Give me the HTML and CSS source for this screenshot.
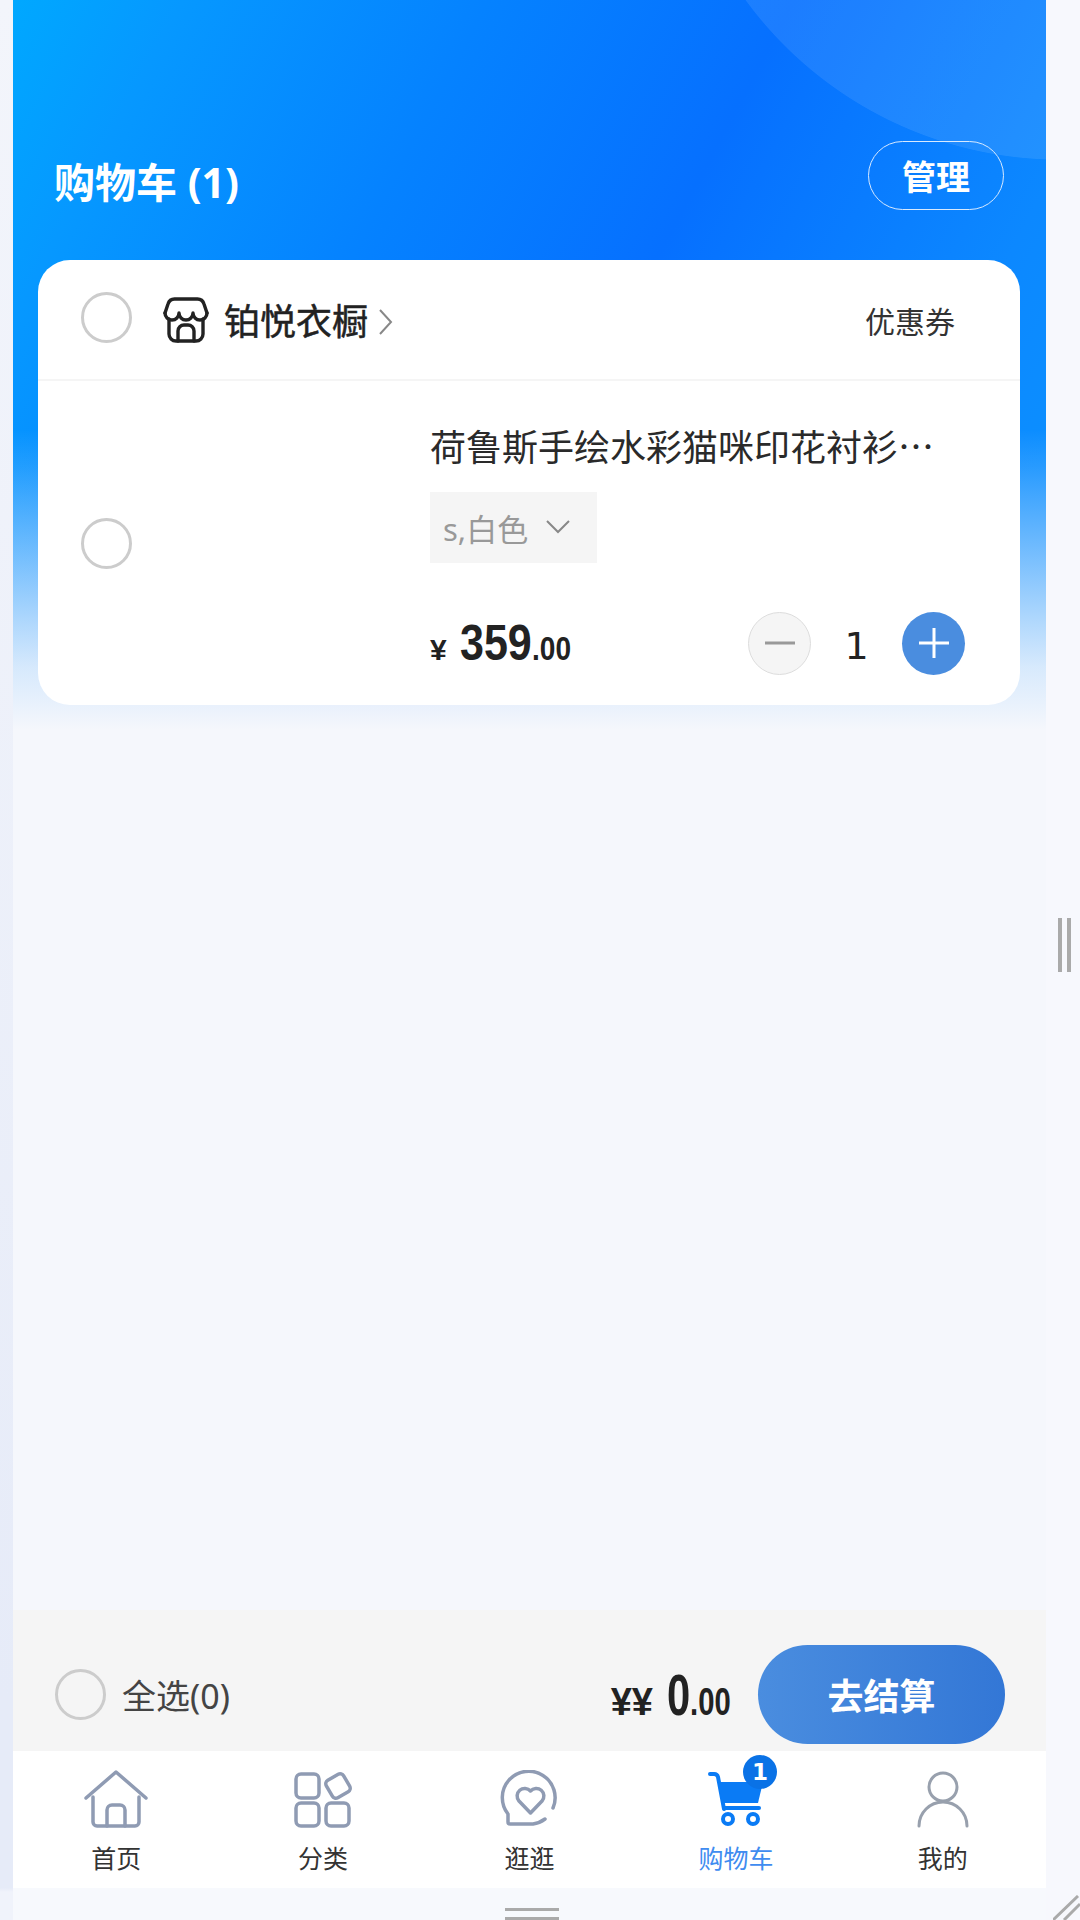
FILE: index.html
```html
<!DOCTYPE html>
<html lang="zh-CN">
<head>
  <meta charset="UTF-8">
  <title>购物车</title>
  <link rel="stylesheet" href="styles.css">
</head>
<body>
  <div class="stage">
    <div class="rail-left"></div>

    <div class="phone">
      <header class="top">
        <h1 class="title">购物车 (1)</h1>
        <button class="manage">管理</button>
      </header>

      <section class="card">
        <div class="shop">
          <span class="check"></span>
          <svg class="shop-icon" viewBox="0 0 46 46" fill="none" stroke="#222" stroke-width="3.400" stroke-linecap="round" stroke-linejoin="round">
            <path d="M2 16L5 7a7 7 0 0 1 7-5h22a7 7 0 0 1 7 5l3 9"/>
            <path d="M2 16a7 7 0 0 0 14 0 7 7 0 0 0 14 0 7 7 0 0 0 14 0"/>
            <path d="M6 22v15a7 7 0 0 0 7 7h20a7 7 0 0 0 7-7V22"/>
            <path d="M15 44V34a6 6 0 0 1 6-6h4a6 6 0 0 1 6 6v10"/>
          </svg>
          <span class="shop-name">铂悦衣橱</span>
          <svg class="shop-arrow" viewBox="0 0 14 26" fill="none" stroke="#888" stroke-width="2"><path d="M1 1l11 12L1 25"/></svg>
          <span class="coupon">优惠券</span>
        </div>

        <div class="product">
          <span class="check"></span>
          <div class="product-img"></div>
          <div class="info">
            <div class="name">荷鲁斯手绘水彩猫咪印花衬衫…</div>
            <div class="spec">
              <span>s,白色</span>
              <svg class="spec-arrow" viewBox="0 0 24 14" fill="none" stroke="#888" stroke-width="2"><path d="M1 1l11 11L23 1"/></svg>
            </div>
            <div class="buy">
              <div class="price"><span class="cur">¥</span><span class="int">359</span><span class="dec">.00</span></div>
              <div class="stepper">
                <span class="step minus"><svg viewBox="0 0 32 32" stroke="#999" stroke-width="3"><path d="M1 16h30"/></svg></span>
                <span class="qty">1</span>
                <span class="step plus"><svg viewBox="0 0 32 32" stroke="#fff" stroke-width="3"><path d="M1 16h30M16 1v30"/></svg></span>
              </div>
            </div>
          </div>
        </div>
      </section>

      <section class="settle">
        <span class="check"></span>
        <span class="all">全选(0)</span>
        <div class="total"><span class="cur">¥¥</span><span class="int">0</span><span class="dec">.00</span></div>
        <button class="pay">去结算</button>
      </section>

      <nav class="tabs">
        <a class="tab">
          <svg class="tab-icon" width="64" height="58" viewBox="0 0 64 58" fill="none" stroke="#8f9bb3" stroke-width="3.500" stroke-linecap="round" stroke-linejoin="round">
            <path d="M2 28L32 2l30 26"/>
            <path d="M9 27v25a4 4 0 0 0 4 4h38a4 4 0 0 0 4-4V27"/>
            <path d="M23 56V40a5 5 0 0 1 5-5h8a5 5 0 0 1 5 5v16"/>
          </svg>
          <span>首页</span>
        </a>
        <a class="tab">
          <svg class="tab-icon" width="58" height="58" viewBox="0 0 58 58" fill="none" stroke="#8f9bb3" stroke-width="3.500">
            <rect x="2" y="4" width="23" height="24" rx="5"/>
            <rect x="2" y="33" width="23" height="23" rx="5"/>
            <rect x="32" y="33" width="23" height="23" rx="5"/>
            <rect x="34" y="6" width="20" height="20" rx="4" transform="rotate(-30 44 16)"/>
          </svg>
          <span>分类</span>
        </a>
        <a class="tab">
          <svg class="tab-icon" width="58" height="58" viewBox="0 0 58 58" fill="none" stroke="#8f9bb3" stroke-width="3.500" stroke-linecap="round" stroke-linejoin="round">
            <path d="M45 49A26.400 26.400 0 0 1 33 54H10a2 2 0 0 1-2-2V44A26.400 26.400 0 1 1 53 38"/>
            <path d="M30.500 43L19 31a7.500 7.500 0 0 1 11.500-10A7.500 7.500 0 0 1 42 31z"/>
          </svg>
          <span>逛逛</span>
        </a>
        <a class="tab active">
          <span class="cart-wrap">
            <svg class="tab-icon" width="58" height="58" viewBox="0 0 58 58" fill="#0a7bf5">
              <path d="M3 4h4a4 4 0 0 1 4 3l6 32" fill="none" stroke="#0a7bf5" stroke-width="4" stroke-linecap="round"/>
              <path d="M11 12h45l-5 21H15z"/>
              <rect x="15" y="36" width="39" height="4" rx="2"/>
              <circle cx="21" cy="49" r="5" fill="none" stroke="#0a7bf5" stroke-width="4"/>
              <circle cx="46" cy="49" r="5" fill="none" stroke="#0a7bf5" stroke-width="4"/>
            </svg>
            <span class="badge">1</span>
          </span>
          <span>购物车</span>
        </a>
        <a class="tab">
          <svg class="tab-icon" width="58" height="58" viewBox="0 0 58 58" fill="none" stroke="#98a0ad" stroke-width="3" stroke-linecap="round">
            <circle cx="29" cy="17" r="14"/>
            <path d="M5 56a24 24 0 0 1 48 0"/>
          </svg>
          <span>我的</span>
        </a>
      </nav>
      <div class="bottom-strip"></div>
      <div class="grip-h"></div>
    </div>

    <div class="rail-right">
      <div class="grip-v"></div>
      <svg class="corner" width="27" height="25" viewBox="0 0 27 25" stroke="#aaa" stroke-width="3"><path d="M0 25L25 1M11 25L27 9"/></svg>
    </div>
  </div>
</body>
</html>
```

FILE: styles.css
```css
* {
  box-sizing: border-box;
}
body {
  margin: 0;
  font-family: "Noto Sans", "Noto Sans CJK SC", sans-serif;
  color: #222;
}
.stage {
  display: flex;
  width: 1080px;
  height: 1920px;
  overflow: hidden;
}
.rail-left {
  width: 13px;
  background: linear-gradient(#f3f5fb, #e6ebf8 1700px, #e6ebf8 1888px, #f0f3fb 1892px);
}
.rail-right {
  position: relative;
  flex: 1;
  background: #f7f8fd;
}
.grip-v {
  position: absolute;
  left: 12px;
  top: 918px;
  width: 13px;
  height: 54px;
  border-left: 4px solid #aaa;
  border-right: 4px solid #aaa;
}
.corner {
  position: absolute;
  right: 0;
  bottom: 0;
}

.phone {
  position: relative;
  display: flex;
  flex-direction: column;
  width: 1033px;
  background:
    radial-gradient(circle 390px at 1047px -230px, rgba(255, 255, 255, .09) 99.800%, transparent 100%) no-repeat,
    linear-gradient(to bottom, rgba(245, 247, 252, 0) 430px, rgba(245, 247, 252, .12) 467px, rgba(245, 247, 252, .25) 500px, rgba(245, 247, 252, .5) 567px, rgba(245, 247, 252, .69) 617px, rgba(245, 247, 252, .87) 667px, #f5f7fc 730px),
    linear-gradient(118deg, #00a8ff 0, #0698ff 150px, #0582ff 420px, #0670ff 690px, #0c88ff 1000px, #0c8eff 1120px);
}

.top {
  display: flex;
  align-items: center;
  justify-content: space-between;
  height: 69px;
  margin: 141px 42px 50px 41px;
}
.title {
  margin: 8px 0 0;
  font-size: 41px;
  font-weight: 700;
  color: #fff;
}
.manage {
  width: 136px;
  height: 69px;
  padding: 0;
  border: 1.500px solid #d8eaff;
  border-radius: 35px;
  background: transparent;
  color: #fff;
  font-family: inherit;
  font-size: 34px;
  font-weight: 700;
}

.card {
  height: 445px;
  margin: 0 26px 0 25px;
  background: #fff;
  border-radius: 32px;
}
.check {
  flex: none;
  width: 51px;
  height: 51px;
  border: 3px solid #ccc;
  border-radius: 50%;
}
.shop {
  display: flex;
  align-items: center;
  height: 121px;
  padding: 0 65px 0 43px;
  border-bottom: 2px solid #f5f5f5;
}
.shop .check {
  margin-bottom: 4px;
}
.shop-icon {
  width: 46px;
  height: 46px;
  margin-left: 31px;
}
.shop-name {
  margin-left: 15px;
  font-size: 36px;
  -webkit-text-stroke: .5px #222;
}
.shop-arrow {
  width: 14px;
  height: 26px;
  margin: 4px 0 0 11px;
}
.coupon {
  margin-left: auto;
  font-size: 30px;
  color: #333;
}

.product {
  display: flex;
  align-items: center;
  height: 324px;
  padding-left: 43px;
}
.product-img {
  width: 298px;
  height: 100%;
}
.info {
  flex: 1;
  padding: 10px 55px 0 0;
}
.name {
  margin-top: -2px;
  font-family: "Noto Sans CJK SC", sans-serif;
  font-size: 36px;
  line-height: 50px;
  color: #2a2a2a;
}
.spec {
  display: inline-flex;
  align-items: center;
  width: 167px;
  height: 71px;
  margin-top: 22px;
  padding-left: 13px;
  background: #f5f5f5;
  font-size: 31px;
  color: #999;
}
.spec-arrow {
  width: 24px;
  height: 14px;
  margin-left: 18px;
}
.buy {
  display: flex;
  align-items: center;
  justify-content: space-between;
  margin-top: 49px;
}
.price,
.total {
  font-family: "Liberation Sans", sans-serif;
  font-weight: 700;
  white-space: nowrap;
}
.int,
.dec {
  display: inline-block;
  transform-origin: left bottom;
}
.price .cur {
  font-size: 30px;
}
.price .int {
  width: 72px;
  margin-left: 13px;
  font-size: 50px;
  transform: scaleX(.86);
}
.price .dec {
  width: 39px;
  font-size: 33px;
  transform: scaleX(.85);
}
.total .cur {
  font-size: 38px;
}
.total .int {
  width: 23px;
  margin-left: 14px;
  font-size: 58px;
  transform: scaleX(.72);
}
.total .dec {
  width: 41px;
  font-size: 38px;
  transform: scaleX(.77);
}
.stepper {
  display: flex;
  align-items: center;
}
.step {
  display: flex;
  align-items: center;
  justify-content: center;
  width: 63px;
  height: 63px;
  border-radius: 50%;
}
.step svg {
  width: 32px;
  height: 32px;
}
.minus {
  background: #f5f5f5;
  border: 1.500px solid #ddd;
}
.plus {
  background: #4a8ddf;
}
.qty {
  width: 91px;
  margin-top: 6px;
  font-family: "DejaVu Sans", sans-serif;
  font-size: 38px;
  text-align: center;
}

.settle {
  display: flex;
  align-items: center;
  height: 141px;
  margin-top: auto;
  padding: 28px 41px 0 42px;
  background: #f5f5f5;
}
.all {
  margin-left: 16px;
  font-size: 34px;
  color: #444;
}
.total {
  margin-left: auto;
}
.pay {
  width: 247px;
  height: 99px;
  margin-left: 27px;
  padding: 0;
  border: 0;
  border-radius: 50px;
  background: linear-gradient(90deg, #4a8ddf, #3377d6);
  color: #fff;
  font-family: inherit;
  font-size: 36px;
  font-weight: 700;
}

.tabs {
  display: grid;
  grid-template-columns: repeat(5, 1fr);
  height: 137px;
  padding-top: 19px;
  background: #fff;
}
.tab {
  display: flex;
  flex-direction: column;
  align-items: center;
  font-size: 25px;
  line-height: 32px;
  color: #333;
}
.tab-icon {
  display: block;
  margin-bottom: 14px;
}
.tab.active {
  color: #3f8cf0;
}
.cart-wrap {
  position: relative;
  display: block;
}
.badge {
  position: absolute;
  left: 36px;
  top: -15px;
  width: 34px;
  height: 34px;
  border-radius: 50%;
  background: #0a72e6;
  color: #fff;
  font-family: "DejaVu Sans", sans-serif;
  font-size: 23px;
  font-weight: 700;
  line-height: 34px;
  text-align: center;
}

.bottom-strip {
  height: 32px;
  background: #f7f9fd;
}
.grip-h {
  position: absolute;
  left: 492px;
  bottom: 0;
  width: 54px;
  height: 12px;
  border-top: 3px solid #aaa;
  border-bottom: 3px solid #aaa;
}
```
